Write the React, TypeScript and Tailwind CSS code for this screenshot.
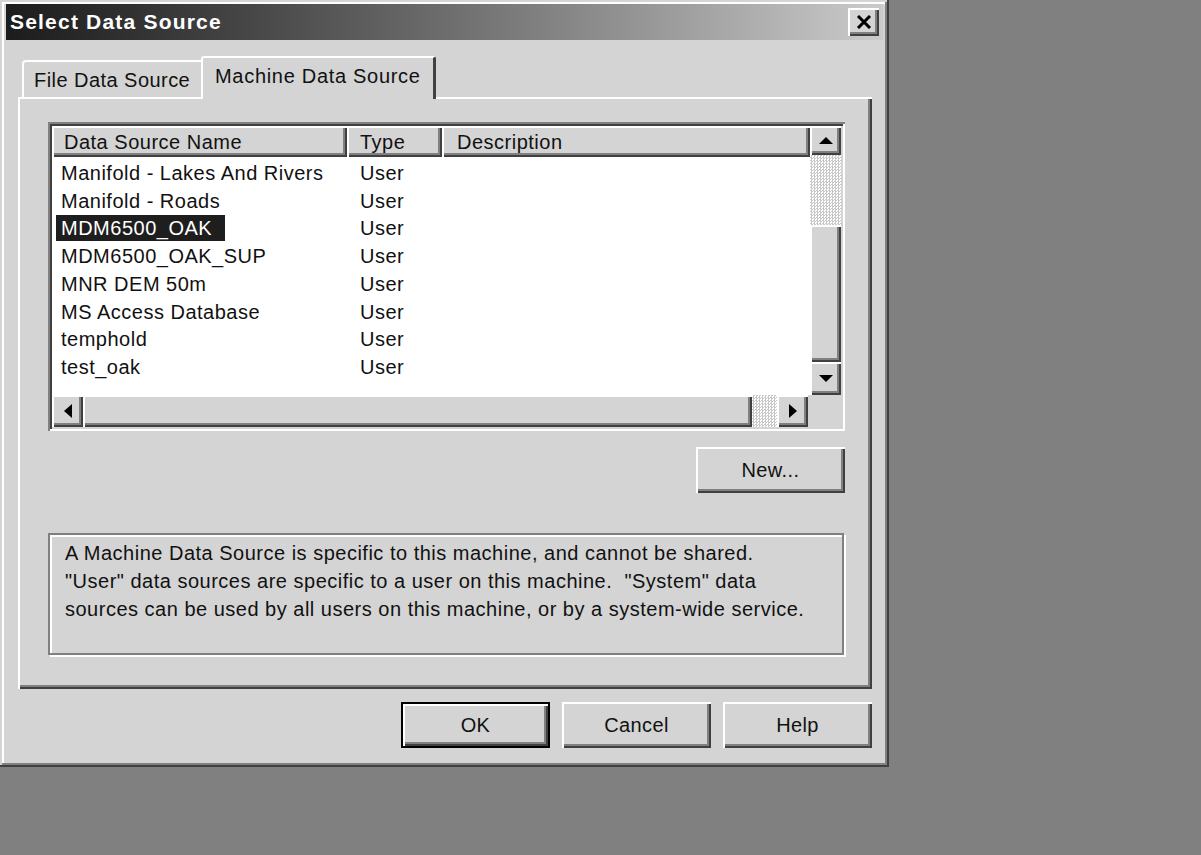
import React from "react";

const raised =
    "shadow-[inset_2px_2px_0_#ffffff,inset_-2px_-2px_0_#404040,inset_-4px_-4px_0_#808080]";

const rows = [
    { name: "Manifold - Lakes And Rivers", type: "User" },
    { name: "Manifold - Roads", type: "User" },
    { name: "MDM6500_OAK", type: "User", selected: true },
    { name: "MDM6500_OAK_SUP", type: "User" },
    { name: "MNR DEM 50m", type: "User" },
    { name: "MS Access Database", type: "User" },
    { name: "temphold", type: "User" },
    { name: "test_oak", type: "User" },
];

function Arrow({ dir }: { dir: "up" | "down" | "left" | "right" }) {
    const pts = {
        up: "7,0 14,7 0,7",
        down: "0,0 14,0 7,7",
        left: "8,0 8,14 0,7",
        right: "0,0 8,7 0,14",
    }[dir];
    const vertical = dir === "up" || dir === "down";
    return (
        <svg width={vertical ? 14 : 8} height={vertical ? 7 : 14} viewBox={vertical ? "0 0 14 7" : "0 0 8 14"}>
            <polygon points={pts} fill="#000" />
        </svg>
    );
}

function ScrollBtn({ dir, className }: { dir: "up" | "down" | "left" | "right"; className: string }) {
    return (
        <div className={`flex items-center justify-center bg-[#d4d4d4] ${raised} ${className}`}>
            <Arrow dir={dir} />
        </div>
    );
}

function Button({ label, isDefault }: { label: string; isDefault?: boolean }) {
    return (
        <button
            className={`w-[149px] h-[46px] bg-[#d4d4d4] text-[20px] tracking-[0.4px] text-[#111] ${raised} ${
                isDefault ? "border-2 border-black" : ""
            }`}
        >
            {label}
        </button>
    );
}

export default function App() {
    return (
        <div className="w-full h-[855px] bg-[#808080] font-['Liberation_Sans',Arial,sans-serif] text-[#111]">
            <div className="w-[889px] h-[767px] bg-[#d4d4d4] p-[4px] flex flex-col shadow-[inset_-2px_-2px_0_#404040,inset_2px_2px_0_#d4d4d4,inset_-4px_-4px_0_#808080,inset_4px_4px_0_#ffffff]">
                {/* Заголовок */}
                <div className="mx-[2px] h-[36px] flex items-center justify-between bg-gradient-to-r from-[#1c1c1c] to-[#cbcbcb] pl-[4px] pr-[4px]">
                    <span className="text-white font-bold text-[21px] tracking-[1.2px]">Select Data Source</span>
                    <div className={`w-[31px] h-[28px] flex items-center justify-center bg-[#d4d4d4] ${raised}`}>
                        <svg width="16" height="14" viewBox="0 0 16 14">
                            <path d="M2 1 L14 13 M14 1 L2 13" stroke="#000" strokeWidth="3" />
                        </svg>
                    </div>
                </div>

                <div className="flex flex-col px-[14px] mt-[16px]">
                    {/* Вкладки */}
                    <div className="flex items-end pl-[4px] h-[41px]">
                        <div className="w-[179px] h-[37px] border-l-2 border-t-2 border-white rounded-tl-[4px] flex items-center pl-[10px] text-[20px] tracking-[0.45px]">
                            File Data Source
                        </div>
                        <div className="relative z-10 -mb-[2px] w-[235px] h-[43px] bg-[#d4d4d4] border-l-2 border-t-2 border-white border-r-[3px] border-r-[#404040] rounded-tl-[3px] rounded-tr-[3px] flex items-start pt-[3px] pl-[12px] text-[20px] tracking-[0.7px]">
                            Machine Data Source
                        </div>
                    </div>

                    {/* Панель */}
                    <div className={`w-[854px] h-[592px] flex flex-col pt-[25px] pl-[30px] ${raised}`}>
                        {/* Список */}
                        <div className="w-[797px] h-[309px] bg-white flex flex-col p-[4px] shadow-[inset_2px_2px_0_#808080,inset_-2px_-2px_0_#ffffff,inset_4px_4px_0_#404040,inset_-4px_-4px_0_#d4d4d4]">
                            <div className="flex h-[269px]">
                                <div className="flex-1 flex flex-col">
                                    <div className="flex h-[31px] text-[20px] tracking-[0.5px]">
                                        <div className={`w-[295px] bg-[#d4d4d4] flex items-center pl-[12px] ${raised}`}>Data Source Name</div>
                                        <div className={`w-[95px] bg-[#d4d4d4] flex items-center pl-[13px] ${raised}`}>Type</div>
                                        <div className={`flex-1 bg-[#d4d4d4] flex items-center pl-[15px] ${raised}`}>Description</div>
                                    </div>
                                    <div className="flex flex-col pt-[2px] text-[20px] tracking-[0.5px]">
                                        {rows.map((r) => (
                                            <div key={r.name} className="flex h-[27.75px] items-center">
                                                <div className="w-[295px] pl-[4px]">
                                                    <span
                                                        className={`inline-block pl-[5px] pr-[13px] leading-[26px] ${
                                                            r.selected ? "bg-[#1e1e1e] text-white" : ""
                                                        }`}
                                                    >
                                                        {r.name}
                                                    </span>
                                                </div>
                                                <div className="w-[95px] pl-[13px]">{r.type}</div>
                                            </div>
                                        ))}
                                    </div>
                                </div>
                                {/* Вертикальная прокрутка */}
                                <div className="w-[31px] flex flex-col">
                                    <ScrollBtn dir="up" className="h-[29px]" />
                                    <div className="h-[70px] bg-[repeating-conic-gradient(#c8c8c8_0%_25%,#ffffff_0%_50%)] bg-[length:3px_3px]" />
                                    <div className={`h-[137px] bg-[#d4d4d4] ${raised}`} />
                                    <ScrollBtn dir="down" className="h-[33px]" />
                                </div>
                            </div>
                            {/* Горизонтальная прокрутка */}
                            <div className="flex h-[32px]">
                                <div className="flex-1 flex">
                                    <ScrollBtn dir="left" className="w-[31px]" />
                                    <div className={`flex-1 bg-[#d4d4d4] ${raised}`} />
                                    <div className="w-[25px] bg-[repeating-conic-gradient(#c8c8c8_0%_25%,#ffffff_0%_50%)] bg-[length:3px_3px]" />
                                    <ScrollBtn dir="right" className="w-[31px]" />
                                </div>
                                <div className="w-[33px] bg-[#d4d4d4]" />
                            </div>
                        </div>

                        <div className="w-[797px] flex justify-end mt-[16px]">
                            <button className={`w-[149px] h-[46px] bg-[#d4d4d4] text-[20px] tracking-[0.4px] ${raised}`}>New...</button>
                        </div>

                        {/* Описание */}
                        <div className="mt-[40px] w-[796px] h-[122px] border-2 border-[#808080] shadow-[inset_2px_2px_0_#ffffff,2px_2px_0_#ffffff] pl-[15px] pt-[4px] text-[20px] leading-[28px] tracking-[0.5px]">
                            <p>A Machine Data Source is specific to this machine, and cannot be shared.</p>
                            <p>"User" data sources are specific to a user on this machine.&nbsp; "System" data</p>
                            <p>sources can be used by all users on this machine, or by a system-wide service.</p>
                        </div>
                    </div>

                    {/* Кнопки */}
                    <div className="w-[854px] flex justify-end gap-[12px] mt-[13px]">
                        <Button label="OK" isDefault />
                        <Button label="Cancel" />
                        <Button label="Help" />
                    </div>
                </div>
            </div>
        </div>
    );
}
